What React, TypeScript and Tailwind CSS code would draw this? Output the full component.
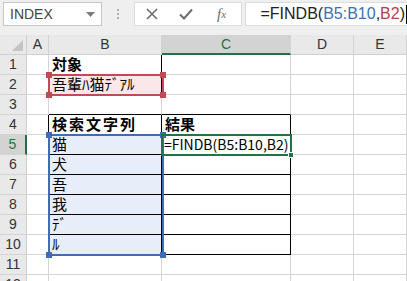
import { Fragment } from 'react'

const cols = [
  { key: '', w: 27 },
  { key: 'A', w: 22 },
  { key: 'B', w: 113 },
  { key: 'C', w: 129 },
  { key: 'D', w: 63 },
  { key: 'E', w: 53 },
]

const jp = "font-['Noto_Sans_CJK_JP',sans-serif]"

// 黒罫線の付いたセル (右・下)
const blackRight: Record<string, boolean> = {
  A4: true, A5: true, A6: true, A7: true, A8: true, A9: true, A10: true,
  B1: true, B2: true, B4: true, B5: true, B6: true, B7: true, B8: true, B9: true, B10: true,
  C4: true, C5: true, C6: true, C7: true, C8: true, C9: true, C10: true,
}
const blackBottom: Record<string, boolean> = {
  B1: true, B2: true, B3: true, B4: true, B5: true, B6: true, B7: true, B8: true, B9: true, B10: true,
  C3: true, C4: true, C5: true, C6: true, C7: true, C8: true, C9: true, C10: true,
}

const values: Record<string, { text: string; cls?: string }> = {
  B1: { text: '対象', cls: 'font-bold' },
  B2: { text: '吾輩ﾊ猫ﾃﾞｱﾙ' },
  B4: { text: '検索文字列', cls: 'font-bold tracking-[2px]' },
  C4: { text: '結果', cls: 'font-bold' },
  B5: { text: '猫' },
  B6: { text: '犬' },
  B7: { text: '吾' },
  B8: { text: '我' },
  B9: { text: 'ﾃﾞ' },
  B10: { text: 'ﾙ' },
}

function Handle({ className }: { className: string }) {
  return <div className={`absolute w-[6px] h-[6px] ${className}`} />
}

function Toolbar() {
  return (
    <div className="h-[35px] bg-[#efefef] flex items-start pt-[2px] pl-[3px] pr-0 gap-0">
      <div className="w-[101px] h-[24px] bg-white border border-[#c6c6c6] flex items-center justify-between pl-[6px] pr-[6px]">
        <span className="font-['Liberation_Sans',sans-serif] text-[14px] text-[#444]">INDEX</span>
        <svg width="9" height="5" viewBox="0 0 9 5"><path d="M0 0h9L4.5 5z" fill="#7a7a7a" /></svg>
      </div>
      <div className="w-[32px] h-[24px] flex flex-col items-center justify-center gap-[2px]">
        <div className="w-[2px] h-[2px] bg-[#b0b0b0]" />
        <div className="w-[2px] h-[2px] bg-[#b0b0b0]" />
        <div className="w-[2px] h-[2px] bg-[#b0b0b0]" />
      </div>
      <div className="w-[108px] h-[24px] bg-white border border-[#dcdcdc] flex items-center">
        <div className="w-[34px] flex justify-center">
          <svg width="12" height="12" viewBox="0 0 12 12"><path d="M1 1l10 10M11 1L1 11" stroke="#6b6b6b" strokeWidth="1.6" /></svg>
        </div>
        <div className="w-[34px] flex justify-center">
          <svg width="14" height="12" viewBox="0 0 14 12"><path d="M1 6.5l4 4L13 1.5" stroke="#6b6b6b" strokeWidth="2" fill="none" /></svg>
        </div>
        <div className="w-[38px] flex justify-center font-['Liberation_Serif',serif] italic text-[15px] text-[#6b6b6b] leading-none">
          f<span className="text-[11px] relative top-[2px]">x</span>
        </div>
      </div>
      <div className="w-[4px]" />
      <div className="flex-1 h-[24px] bg-white border border-[#dcdcdc] border-r-0 flex items-center pl-[14px] font-['Liberation_Sans',sans-serif] text-[16px] text-[#222]">
        <span>=FINDB(</span>
        <span className="text-[#3d6fb7]">B5:B10</span>
        <span>,</span>
        <span className="text-[#b7404a]">B2</span>
        <span>)</span>
        <span className="w-[1px] h-[19px] bg-black ml-[1px]" />
      </div>
    </div>
  )
}

export default function App() {
  const rows = Array.from({ length: 12 }, (_, i) => i + 1)
  return (
    <div className="w-[407px] h-[281px] overflow-hidden bg-white relative">
      <Toolbar />
      <div
        className="grid"
        style={{ gridTemplateColumns: cols.map(c => `${c.w}px`).join(' ') }}
      >
        {/* column headers */}
        {cols.map((c, i) =>
          i === 0 ? (
            <div key="corner" className="h-[20px] bg-[#e9e9e9] border-r border-b border-[#cfcfcf] relative">
              <svg className="absolute right-[3px] bottom-[3px]" width="11" height="11" viewBox="0 0 11 11"><path d="M11 0v11H0z" fill="#c4c4c4" /></svg>
            </div>
          ) : (
            <div
              key={c.key}
              className={`h-[20px] flex items-center justify-center font-['Liberation_Sans',sans-serif] text-[14px] border-r border-[#d4d4d4] ${
                c.key === 'C'
                  ? 'bg-[#d3d3d3] text-[#217346] border-b-2 border-b-[#217346]'
                  : 'bg-[#e9e9e9] text-[#333] border-b border-b-[#cfcfcf]'
              }`}
            >
              {c.key}
            </div>
          )
        )}
        {rows.map(r => (
          <Fragment key={r}>
            <div
              className={`h-[20px] flex items-center justify-center font-['Liberation_Sans',sans-serif] text-[14px] border-b border-[#d4d4d4] ${
                r === 5
                  ? 'bg-[#d3d3d3] text-[#217346] border-r-2 border-r-[#217346]'
                  : 'bg-[#e9e9e9] text-[#333] border-r border-r-[#cfcfcf]'
              }`}
            >
              {r}
            </div>
            {cols.slice(1).map(c => {
              const id = `${c.key}${r}`
              const v = values[id]
              const fill =
                id === 'B2' ? 'bg-[#fbe7ea]' : c.key === 'B' && r >= 5 && r <= 10 ? 'bg-[#e8eef9]' : ''
              return (
                <div
                  key={id}
                  className={`h-[20px] border-r border-b flex items-center pl-[3px] overflow-visible whitespace-nowrap text-[15px] text-black ${jp} ${fill} ${
                    blackRight[id] ? 'border-r-black' : 'border-r-[#d4d4d4]'
                  } ${blackBottom[id] ? 'border-b-black' : 'border-b-[#d4d4d4]'} ${v?.cls ?? ''}`}
                >
                  {v?.text}
                  {id === 'C5' && <span className="relative z-10 text-[14px] -ml-[1px]">=FINDB(B5:B10,B2)</span>}
                </div>
              )
            })}
          </Fragment>
        ))}
      </div>

      {/* B2 参照 (赤) */}
      <div className="absolute left-[48px] top-[74px] w-[116px] h-[22px] border-2 border-[#be4b55]">
        <Handle className="-left-[4px] -top-[4px] bg-[#be4b55]" />
        <Handle className="-right-[4px] -top-[4px] bg-[#be4b55]" />
        <Handle className="-left-[4px] -bottom-[4px] bg-[#be4b55]" />
        <Handle className="-right-[4px] -bottom-[4px] bg-[#be4b55]" />
      </div>

      {/* B5:B10 参照 (青) */}
      <div className="absolute left-[48px] top-[134px] w-[116px] h-[122px] border-2 border-[#3d6db5]">
        <Handle className="-left-[4px] -top-[4px] bg-[#3d6db5]" />
        <Handle className="-right-[4px] -top-[4px] bg-[#3d6db5]" />
        <Handle className="-left-[4px] -bottom-[4px] bg-[#3d6db5]" />
        <Handle className="-right-[4px] -bottom-[4px] bg-[#3d6db5]" />
      </div>

      {/* アクティブセル C5 */}
      <div className="absolute left-[161px] top-[134px] w-[131px] h-[22px] border-2 border-[#217346]">
        <Handle className="-right-[4px] -bottom-[4px] w-[5px] h-[5px] bg-[#217346] border border-white" />
      </div>
    </div>
  )
}
